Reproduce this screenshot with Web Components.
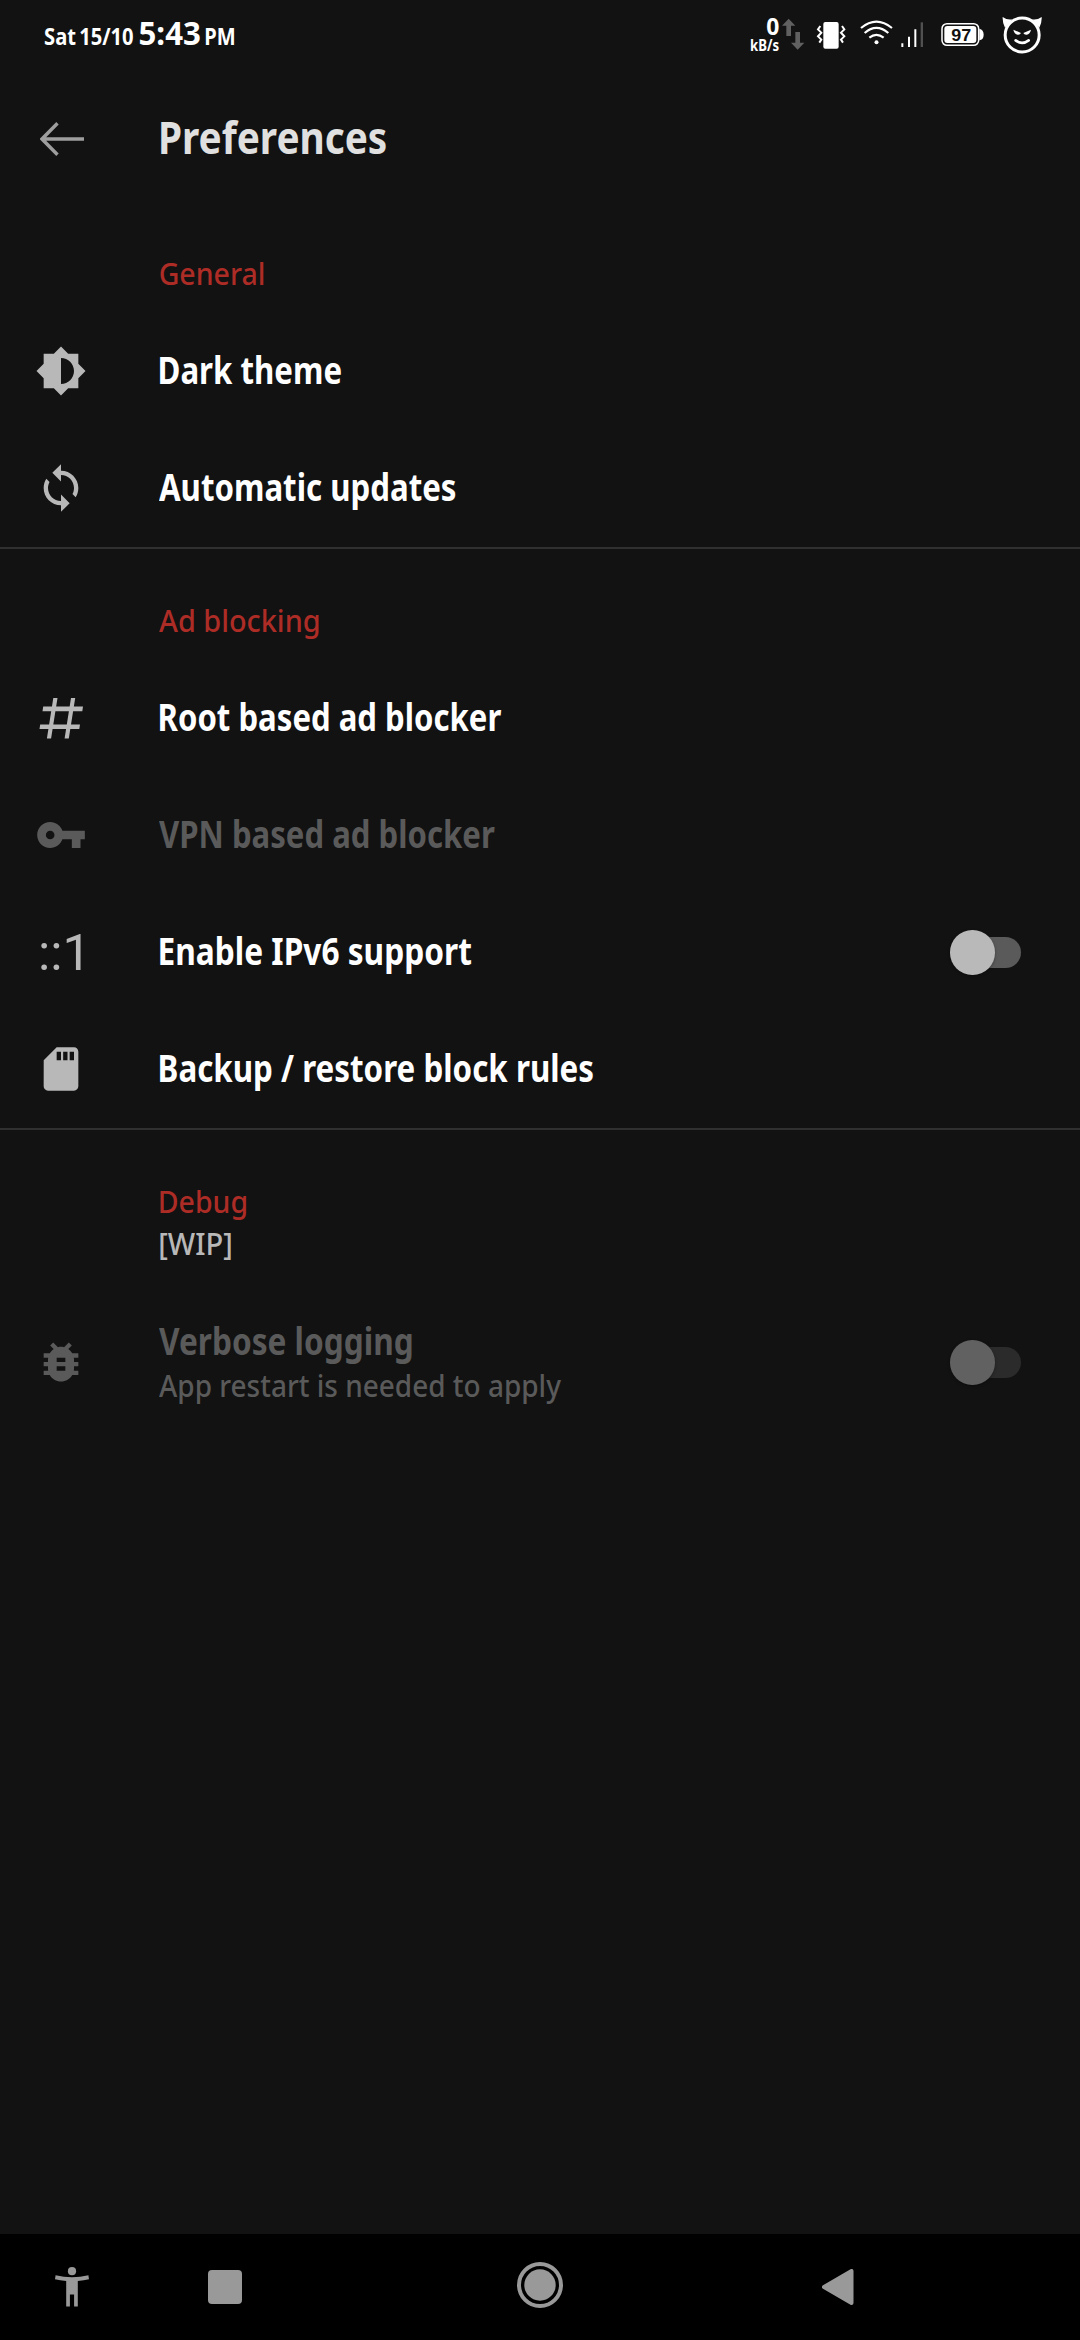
<!DOCTYPE html>
<html lang="en">
<head>
<meta charset="utf-8">
<title>Preferences</title>
<style>
html,body{margin:0;background:#121212}
body{font-family:"Noto Sans","Open Sans",sans-serif;color:#fff}
</style>
</head>
<body>
<app-screen>
  <status-bar slot="status"></status-bar>
  <app-toolbar slot="toolbar" label="Preferences" width="225"></app-toolbar>
  <pref-group>
    <pref-header label="General" width="103.5" shift="-0.5"></pref-header>
    <pref-item icon="brightness" label="Dark theme" width="181"></pref-item>
    <pref-item icon="sync" label="Automatic updates" width="296.5" shift="-1.5"></pref-item>
  </pref-group>
  <pref-group>
    <pref-header label="Ad blocking" width="159.5" shift="-1"></pref-header>
    <pref-item icon="hash" label="Root based ad blocker" width="341"></pref-item>
    <pref-item icon="key" label="VPN based ad blocker" width="335.5" shift="-1" disabled></pref-item>
    <pref-item icon="ipv6" label="Enable IPv6 support" width="311"><toggle-switch></toggle-switch></pref-item>
    <pref-item icon="sd" label="Backup / restore block rules" width="433"></pref-item>
  </pref-group>
  <pref-group last>
    <pref-header label="Debug" width="86" summary="[WIP]" swidth="71"></pref-header>
    <pref-item icon="bug" label="Verbose logging" width="252.5" shift="-1" summary="App restart is needed to apply" swidth="402" disabled><toggle-switch disabled></toggle-switch></pref-item>
  </pref-group>
  <nav-bar slot="nav"></nav-bar>
</app-screen>
<script>
const ctx = document.createElement('canvas').getContext('2d');
const attr = (el, name, fallback = '') => el.getAttribute(name) ?? fallback;
const define = (name, render, after) => customElements.define(name, class extends HTMLElement {
  connectedCallback() {
    if (this.shadowRoot) return;
    this.attachShadow({mode: 'open'}).innerHTML = render(this);
    if (after) after(this);
  }
});

/* One line of text whose visible ink spans exactly `width` pixels. */
define('fit-text', el => `<style>
  :host{display:block;flex:none;width:${attr(el,'width')}px;height:${attr(el,'line')}px;margin-left:${attr(el,'shift','0')}px}
  span{display:block;width:max-content;white-space:pre;line-height:${attr(el,'line')}px;font-size:${attr(el,'size')}px;font-weight:${attr(el,'weight','400')};word-spacing:${attr(el,'gap','0')}px;transform-origin:0 0}
  </style><span>${attr(el,'text')}</span>`, el => {
  const span = el.shadowRoot.querySelector('span');
  /* Measured ten times larger, since canvas ink bounds come in whole pixels. */
  ctx.font = `${attr(el,'weight','400')} ${attr(el,'size') * 10}px "Noto Sans","Open Sans",sans-serif`;
  ctx.wordSpacing = `${attr(el,'gap','0') * 10}px`;
  const m = ctx.measureText(attr(el,'text'));
  const left = m.actualBoundingBoxLeft / 10, right = m.actualBoundingBoxRight / 10;
  const s = attr(el,'width') / (left + right);
  span.style.transform = `matrix(${s},0,0,1,${left * s},0)`;
});

const ICONS = {
  brightness: '<path d="M20 15.31L23.31 12 20 8.69V4h-4.69L12 .69 8.69 4H4v4.69L.69 12 4 15.31V20h4.69L12 23.31 15.31 20H20v-4.69zM12 18V6c3.31 0 6 2.69 6 6s-2.69 6-6 6z"/>',
  sync: '<path d="M12 4V1L8 5l4 4V6c3.31 0 6 2.69 6 6 0 1.01-.25 1.97-.7 2.8l1.46 1.46C19.54 15.03 20 13.57 20 12c0-4.42-3.58-8-8-8zm0 14c-3.31 0-6-2.69-6-6 0-1.01.25-1.97.7-2.8L5.24 7.74C4.46 8.97 4 10.43 4 12c0 4.42 3.58 8 8 8v3l4-4-4-4v3z"/>',
  hash: '<g transform="scale(.461538)"><path d="M18.3 6h4.2l-6.4 40.5h-4.2zM36 6h4.2l-6.4 40.5h-4.2zM8.2 14.6h39.8l-.7 4.6H7.5zM5.2 32.5H45l-.7 4.6H4.5z"/></g>',
  key: '<path d="M12.65 10C11.83 7.67 9.61 6 7 6c-3.31 0-6 2.69-6 6s2.69 6 6 6c2.61 0 4.83-1.67 5.65-4H17v4h4v-4h2v-4H12.65zM7 14c-1.1 0-2-.9-2-2s.9-2 2-2 2 .9 2 2-.9 2-2 2z"/>',
  ipv6: '<text x="1.4" y="20.2" font-family="Roboto" font-size="23.35">::1</text>',
  sd: '<path d="M18 2h-8L4.02 8 4 20c0 1.1.9 2 2 2h12c1.1 0 2-.9 2-2V4c0-1.1-.9-2-2-2zm-6 6h-2V4h2v4zm3 0h-2V4h2v4zm3 0h-2V4h2v4z"/>',
  bug: '<path d="M20 8h-2.81c-.45-.78-1.07-1.45-1.82-1.96L17 4.41 15.59 3l-2.17 2.17C12.96 5.06 12.49 5 12 5c-.49 0-.96.06-1.41.17L8.41 3 7 4.41l1.62 1.63C7.88 6.55 7.26 7.22 6.81 8H4v2h2.09c-.05.33-.09.66-.09 1v1H4v2h2v1c0 .34.04.67.09 1H4v2h2.81c1.04 1.79 2.97 3 5.19 3s4.15-1.21 5.19-3H20v-2h-2.09c.05-.33.09-.66.09-1v-1h2v-2h-2v-1c0-.34-.04-.67-.09-1H20V8zm-6 8h-4v-2h4v2zm0-4h-4v-2h4v2z"/>'
};
define('pref-icon', el => `<style>:host{display:block;flex:none;width:52px;height:52px;margin-bottom:1px}svg{display:block;overflow:visible;fill:currentColor}</style>
  <svg width="52" height="52" viewBox="0 0 24 24">${ICONS[attr(el,'name')]}</svg>`);

define('toggle-switch', el => {
  const off = el.hasAttribute('disabled');
  return `<style>:host{display:block;flex:none}
  .track{display:flex;align-items:center;width:65px;height:31px;border-radius:16px;background:${off ? '#2b2b2b' : '#5a5a5a'}}
  .thumb{flex:none;width:44.5px;height:44.5px;margin-left:-5.7px;border-radius:50%;background:${off ? '#616161' : '#b9b9b9'};box-shadow:0 1px 3px rgba(0,0,0,.35)}
  </style><div class="track"><div class="thumb"></div></div>`;
});

define('pref-header', el => `<style>
  :host{display:flex;flex-direction:column;box-sizing:border-box;height:${el.hasAttribute('summary') ? 155 : 111}px;padding:52px 0 0 160px;color:#ad2c26}
  .sum{color:#b8b8b8;margin-top:2px}
  </style><fit-text text="${attr(el,'label')}" width="${attr(el,'width')}" shift="${attr(el,'shift','0')}" size="30" line="40" weight="500"></fit-text>
  ${el.hasAttribute('summary') ? `<fit-text class="sum" text="${attr(el,'summary')}" width="${attr(el,'swidth')}" size="30" line="40" weight="500"></fit-text>` : ''}`);

define('pref-item', el => {
  const off = el.hasAttribute('disabled'), two = el.hasAttribute('summary');
  return `<style>
  :host{display:flex;align-items:center;box-sizing:border-box;height:${two ? 155 : 117}px;padding:0 59px 0 35px;color:${off ? '#5a5a5a' : '#fff'}}
  pref-icon{color:${off ? '#5a5a5a' : '#b8b8b8'}}
  .text{flex:1;margin-left:73px;padding-bottom:3px}
  </style><pref-icon name="${attr(el,'icon')}"></pref-icon>
  <div class="text"><fit-text text="${attr(el,'label')}" width="${attr(el,'width')}" shift="${attr(el,'shift','0')}" size="37" line="50" weight="700"></fit-text>
  ${two ? `<fit-text text="${attr(el,'summary')}" width="${attr(el,'swidth')}" shift="-1" size="30" line="40" weight="500"></fit-text>` : ''}</div>
  <slot></slot>`;
});

define('pref-group', el => `<style>:host{display:block}${el.hasAttribute('last') ? '' : ':host{border-bottom:2px solid #303030}'}</style><slot></slot>`);

define('app-toolbar', el => `<style>:host{display:flex;align-items:center;height:132px;box-sizing:border-box;padding:5px 40px 0;color:#e0e0e0}
  svg{display:block;flex:none}.title{margin-left:77px;padding-bottom:3px}</style>
  <svg width="44" height="34" viewBox="0 0 44 34" fill="none" stroke="#9e9e9e" stroke-width="3.4"><path d="M44 17H2M17.5 1.2L2 17l15.5 15.8"/></svg>
  <div class="title"><fit-text text="${attr(el,'label')}" width="${attr(el,'width')}" size="45" line="62" weight="700"></fit-text></div>`);

/* Status glyphs share one drawing grid of three units per pixel. */
const glyph = (x, w, body) => `<svg width="${w/3}" height="70" viewBox="${x} 0 ${w} 210">${body}</svg>`;
define('status-bar', () => `<style>
  :host{display:flex;height:70px;box-sizing:border-box;padding:0 36px 0 45px}
  svg{display:block;flex:none}
  .clock{display:flex;align-items:flex-start;flex:1}
  .date,.pm{padding-top:20px}.time{padding:11px 6px 0 7px}
  .net{display:flex;flex-direction:column;align-items:flex-end;padding-top:15px}
  </style>
  <div class="clock">
    <div class="date"><fit-text text="Sat 15/10" width="88" size="23" line="32" weight="700" gap="-2.5"></fit-text></div>
    <div class="time"><fit-text text="5:43" width="60" size="32.5" line="44" weight="700"></fit-text></div>
    <div class="pm"><fit-text text="PM" width="28" size="23" line="32" weight="700"></fit-text></div>
  </div>
  <div class="net"><fit-text text="0" width="11.5" size="22.5" line="24" weight="700"></fit-text>
    <fit-text text="kB/s" width="27.5" size="15.5" line="12" weight="700"></fit-text></div>
  ${glyph(145,102,'<path fill="#606060" d="M177 56l20 21h-13v31h-14V77h-13zM204 149l-20-21h13V96h14v32h13z"/>')}
  ${glyph(247,113,'<rect x="281" y="66" width="46" height="80" rx="6" fill="#fff"/><path d="M272 78l-7 10 10 10-10 11 10 10-6 9M337 78l7 10-10 10 10 11-10 10 6 9" fill="none" stroke="#fff" stroke-width="6"/>')}
  ${glyph(360,140,'<g fill="none" stroke="#fff" stroke-width="6.5"><path d="M393 84Q439 46 486 84M404 99Q439 68 475 99M418 113Q439 96 461 113"/></g><circle cx="439.5" cy="127" r="6" fill="#fff"/>')}
  ${glyph(500,120,'<path fill="#fff" d="M513 130h6v11h-6zM533 110h6v31h-6zM552 88h6v53h-6z"/><path fill="#505050" d="M571 67h7v74h-7z"/>')}
  ${glyph(620,160,'<rect x="635" y="71" width="110" height="65" rx="15" fill="none" stroke="#fff" stroke-width="4.5"/><rect x="642" y="78" width="96" height="51" rx="9" fill="#fff"/><path d="M747 86q13 3 13 18t-13 17z" fill="#fff"/><text x="663" y="122" font-family="Liberation Sans" font-weight="700" font-size="49" textLength="60" lengthAdjust="spacingAndGlyphs" fill="#121212">97</text>')}
  ${glyph(780,162,'<circle cx="876.5" cy="105" r="51" fill="none" stroke="#fff" stroke-width="9"/><path fill="#fff" d="M818 51q14 10 29 7l-22 25q-8-16-7-32zM935 51q-14 10-29 7l22 25q8-16 7-32zM850 89l23 10q-3 6-10 5-10-2-13-15zM903 89l-23 10q3 6 10 5 10-2 13-15z"/><path d="M857 121q19 15 39 0" fill="none" stroke="#fff" stroke-width="8" stroke-linecap="round"/>')}
  `);

define('nav-bar', () => `<style>:host{display:flex;align-items:center;height:106px;background:#000;padding-left:55px}svg{display:block;flex:none;fill:#999}
  .recent{margin-left:119px}.home{margin-left:275px;margin-bottom:4px}.back{margin-left:259px}</style>
  <svg width="34" height="40" viewBox="0 0 34 40"><circle cx="17" cy="4.2" r="4.1"/><path d="M.6 8.3Q17 12 33.4 8.3l.6 4q-5 1.1-11.2 1.6V39.5h-3.7V27.5h-4.2v12h-3.7V13.9Q5 13.4 0 12.3z"/></svg>
  <svg class="recent" width="34" height="34"><rect width="34" height="34" rx="4"/></svg>
  <svg class="home" width="46" height="46" viewBox="0 0 46 46"><circle cx="23" cy="23" r="21" fill="none" stroke="#999" stroke-width="4"/><circle cx="23" cy="23" r="15.7"/></svg>
  <svg class="back" width="32" height="36" viewBox="0 0 32 36"><path d="M2 18L29.5 2v32z" stroke="#999" stroke-width="4" stroke-linejoin="round"/></svg>`);

define('app-screen', () => `<style>:host{display:flex;flex-direction:column;width:1080px;height:2340px;background:#121212;overflow:hidden}
  main{flex:1;min-height:0}
  </style><slot name="status"></slot><slot name="toolbar"></slot><main><slot></slot></main><slot name="nav"></slot>`);
</script>
</body>
</html>
